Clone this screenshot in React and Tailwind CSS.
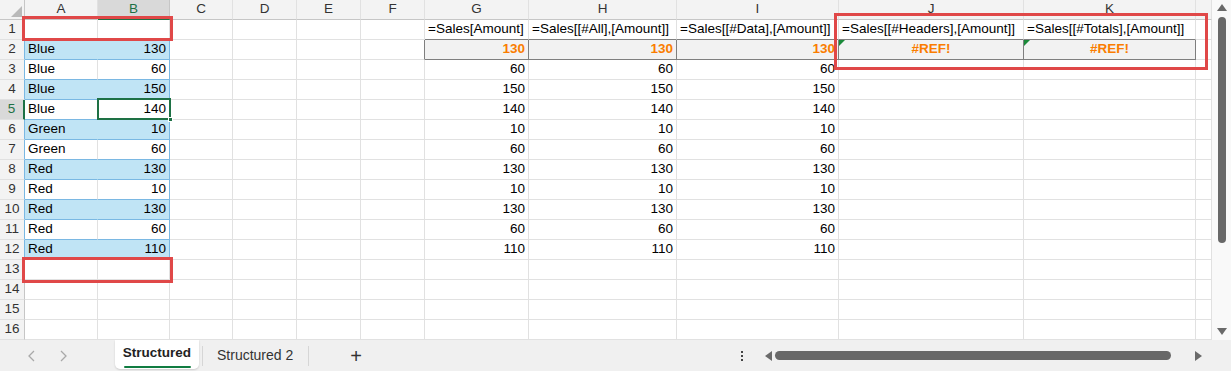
import React from 'react';

const COLS = ['', 'A', 'B', 'C', 'D', 'E', 'F', 'G', 'H', 'I', 'J', 'K', ''];

const tableRows = [
  ['Blue', 130],
  ['Blue', 60],
  ['Blue', 150],
  ['Blue', 140],
  ['Green', 10],
  ['Green', 60],
  ['Red', 130],
  ['Red', 10],
  ['Red', 130],
  ['Red', 60],
  ['Red', 110],
];

const formulas = {
  7: '=Sales[Amount]',
  8: '=Sales[[#All],[Amount]]',
  9: '=Sales[[#Data],[Amount]]',
  10: '=Sales[[#Headers],[Amount]]',
  11: '=Sales[[#Totals],[Amount]]',
};

// header cell for a column letter
const ColHeader = ({ c }) => {
  if (c === 0) {
    return (
      <div className="relative border-b border-r border-b-[#c6c6c6] border-r-[#c6c6c6] bg-[#f3f3f3]">
        <svg className="absolute right-[2px] bottom-[2px]" width="11" height="11" viewBox="0 0 11 11">
          <path d="M11 0 L11 11 L0 11 Z" fill="#b9b9b9" />
        </svg>
      </div>
    );
  }
  const selected = c === 2;
  return (
    <div
      className={
        selected
          ? 'flex items-center justify-center border-b-2 border-r border-b-[#1e7145] border-r-[#c6c6c6] bg-[#d9d9d9] text-[13.5px] text-[#1e7145]'
          : 'flex items-center justify-center border-b border-r border-b-[#c6c6c6] border-r-[#e1e1e1] bg-[#f3f3f3] text-[13.5px] text-[#333]'
      }
    >
      {COLS[c]}
    </div>
  );
};

const RowHeader = ({ r }) => {
  let cls = 'flex items-center justify-center border-b border-r border-b-[#e1e1e1] border-r-[#c6c6c6] bg-[#f3f3f3] text-[13.5px] text-[#333]';
  if (r >= 2 && r <= 12) {
    cls = 'flex items-center justify-center border-b border-r border-b-[#e1e1e1] border-r-[#7ab8e3] bg-[#f3f3f3] text-[13.5px] text-[#333]';
  }
  if (r === 5) {
    cls = 'flex items-center justify-center border-b border-r-2 border-b-[#e1e1e1] border-r-[#1e7145] bg-[#d9d9d9] text-[13.5px] text-[#1e7145]';
  }
  return <div className={cls}>{r}</div>;
};

const Cell = ({ r, c }) => {
  const base = 'relative flex items-center whitespace-nowrap px-[3px] text-[13.5px]';

  // table A:B
  if ((c === 1 || c === 2) && r >= 1 && r <= 12) {
    if (r === 1) {
      return <div className={`${base} border-b border-r border-b-[#7ab8e3] border-r-[#e1e1e1]`} />;
    }
    const [name, amount] = tableRows[r - 2];
    const banded = r % 2 === 0;
    if (c === 1) {
      return (
        <div
          className={
            banded
              ? `${base} border-b border-r border-b-[#7ab8e3] border-r-[#c0e4f5] bg-[#c0e4f5] text-black`
              : `${base} border-b border-r border-b-[#7ab8e3] border-r-[#e1e1e1] bg-white text-black`
          }
        >
          {name}
        </div>
      );
    }
    return (
      <div
        className={
          banded
            ? `${base} justify-end border-b border-r border-b-[#7ab8e3] border-r-[#7ab8e3] bg-[#c0e4f5] text-black`
            : `${base} justify-end border-b border-r border-b-[#7ab8e3] border-r-[#7ab8e3] bg-white text-black`
        }
      >
        {amount}
      </div>
    );
  }

  // formulas row
  if (r === 1 && c >= 7 && c <= 11) {
    return <div className={`${base} border-b border-r border-b-[#7f7f7f] border-r-[#e1e1e1] text-black`}>{formulas[c]}</div>;
  }

  // calculation style row
  if (r === 2 && c === 6) {
    return <div className={`${base} border-b border-r border-b-[#e1e1e1] border-r-[#7f7f7f]`} />;
  }
  if (r === 2 && c >= 7 && c <= 11) {
    const isRef = c >= 10;
    return (
      <div
        className={
          isRef
            ? `${base} justify-center border-b border-r border-b-[#7f7f7f] border-r-[#7f7f7f] bg-[#f2f2f2] font-bold text-[#fa7d00]`
            : `${base} justify-end border-b border-r border-b-[#7f7f7f] border-r-[#7f7f7f] bg-[#f2f2f2] font-bold text-[#fa7d00]`
        }
      >
        {isRef && (
          <svg className="absolute left-0 top-0" width="6" height="6" viewBox="0 0 6 6">
            <path d="M0 0 L6 0 L0 6 Z" fill="#1b8a3a" />
          </svg>
        )}
        {isRef ? '#REF!' : 130}
      </div>
    );
  }

  if (r >= 3 && r <= 12 && c >= 7 && c <= 9) {
    return (
      <div className={`${base} justify-end border-b border-r border-b-[#e1e1e1] border-r-[#e1e1e1] text-black`}>
        {tableRows[r - 2][1]}
      </div>
    );
  }

  return <div className={`${base} border-b border-r border-b-[#e1e1e1] border-r-[#e1e1e1]`} />;
};

const VScroll = () => (
  <div className="flex h-[340px] w-[19px] flex-col items-center bg-[#f9f9f9] pt-[4px] pb-[5px]">
    <svg width="10" height="7" viewBox="0 0 10 7">
      <path d="M5 0 L10 7 L0 7 Z" fill="#6a6a6a" />
    </svg>
    <div className="mt-[6px] h-[226px] w-[8px] rounded-full bg-[#686868]" />
    <div className="flex-1" />
    <svg width="10" height="7" viewBox="0 0 10 7">
      <path d="M0 0 L10 0 L5 7 Z" fill="#6a6a6a" />
    </svg>
  </div>
);

const TabBar = () => (
  <div className="flex h-[31px] items-center bg-[#f0f0f0]">
    <div className="flex w-[115px] items-center pl-[27px] gap-[21px]">
      <svg width="10" height="12" viewBox="0 0 10 12">
        <path d="M7 1 L2 6 L7 11" fill="none" stroke="#a9a9a9" strokeWidth="1.3" />
      </svg>
      <svg width="10" height="12" viewBox="0 0 10 12">
        <path d="M3 1 L8 6 L3 11" fill="none" stroke="#a9a9a9" strokeWidth="1.3" />
      </svg>
    </div>
    <div className="flex h-[29px] w-[84px] self-start flex-col items-center justify-center rounded-b-[5px] bg-white shadow-[0_1px_2px_rgba(0,0,0,0.15)]">
      <span className="mt-[2px] text-[13.5px] font-bold text-[#222]">Structured</span>
      <div className="mt-[3px] h-[2px] w-[67px] rounded-full bg-[#107c41]" />
    </div>
    <div className="ml-[3px] h-[20px] w-px bg-[#d6d6d6]" />
    <span className="ml-[14px] text-[14px] text-[#333]">Structured 2</span>
    <div className="ml-[15px] h-[20px] w-px bg-[#d6d6d6]" />
    <span className="ml-[41px] text-[20px] font-light leading-none text-[#333]">+</span>
    <div className="flex-1" />
    <div className="mr-[22px] flex flex-col gap-[2px]">
      <div className="h-[2px] w-[2px] bg-[#444]" />
      <div className="h-[2px] w-[2px] bg-[#444]" />
      <div className="h-[2px] w-[2px] bg-[#444]" />
    </div>
    <svg width="7" height="10" viewBox="0 0 7 10">
      <path d="M7 0 L7 10 L0 5 Z" fill="#6a6a6a" />
    </svg>
    <div className="ml-[3px] h-[9px] w-[396px] rounded-full bg-[#686868]" />
    <div className="w-[24px]" />
    <svg width="7" height="10" viewBox="0 0 7 10">
      <path d="M0 0 L7 5 L0 10 Z" fill="#6a6a6a" />
    </svg>
    <div className="w-[29px]" />
  </div>
);

export default function App() {
  const rows = Array.from({ length: 16 }, (_, i) => i + 1);
  return (
    <div className="relative h-[371px] w-[1231px] overflow-hidden bg-white font-['Liberation_Sans',Arial,sans-serif]">
      <div className="flex">
        <div className="grid grid-cols-[25px_73px_72px_63px_64px_64px_64px_104px_148px_162px_185px_172px_16px] grid-rows-[repeat(17,20px)]">
          {COLS.map((_, c) => (
            <ColHeader key={`h${c}`} c={c} />
          ))}
          {rows.map((r) => (
            <React.Fragment key={r}>
              <RowHeader r={r} />
              {COLS.slice(1).map((_, i) => (
                <Cell key={`${r}-${i}`} r={r} c={i + 1} />
              ))}
            </React.Fragment>
          ))}
        </div>
        <VScroll />
      </div>
      <TabBar />

      {/* selection B5 */}
      <div className="pointer-events-none absolute left-[97px] top-[98px] h-[22px] w-[74px] border-2 border-[#1e7145]" />
      <div className="pointer-events-none absolute left-[168px] top-[117px] h-[5px] w-[5px] border border-white bg-[#1e7145]" />

      {/* annotation boxes */}
      <div className="pointer-events-none absolute left-[22px] top-[16px] h-[25px] w-[151px] border-[3px] border-[#e04848]" />
      <div className="pointer-events-none absolute left-[22px] top-[257px] h-[26px] w-[151px] border-[3px] border-[#e04848]" />
      <div className="pointer-events-none absolute left-[834px] top-[13px] h-[57px] w-[374px] border-[3px] border-[#e04848]" />
    </div>
  );
}
